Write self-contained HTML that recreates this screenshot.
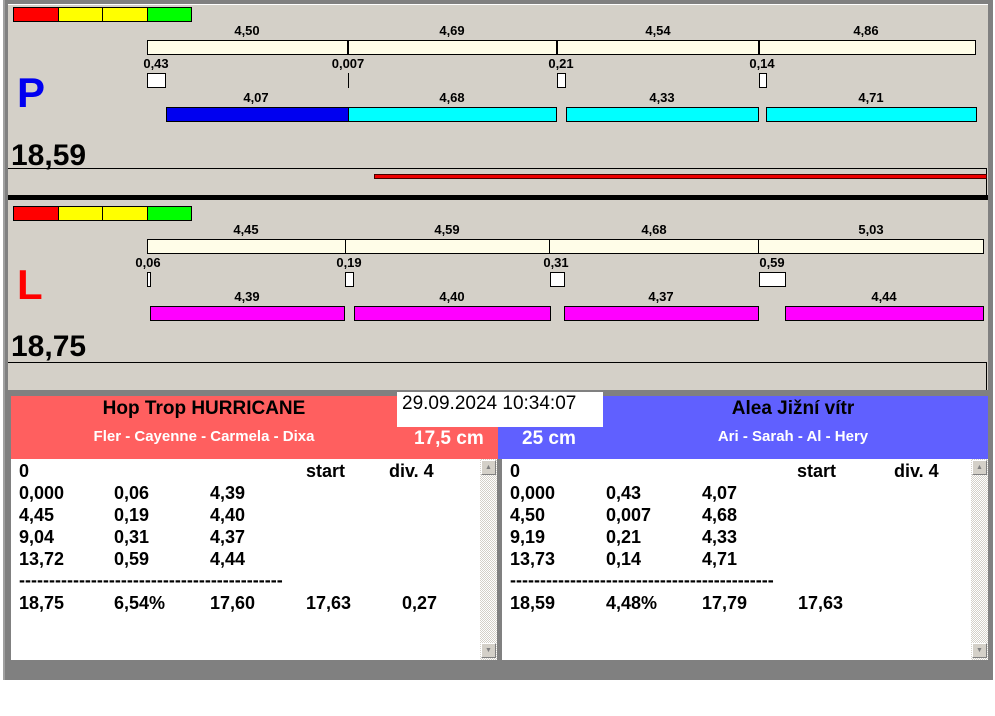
<!DOCTYPE html>
<html><head><meta charset="utf-8"><style>
*{margin:0;padding:0;box-sizing:border-box}
body{width:995px;height:716px;background:#fff;position:relative;overflow:hidden;font-family:"Liberation Sans",Arial,sans-serif;font-weight:bold}
div{position:absolute}
.b{border:1px solid #000}
.t{font-size:13px;color:#000;transform:translateX(-50%);white-space:nowrap;line-height:14px}
.row{font-size:18px;line-height:22px;color:#000;white-space:nowrap}
.sb{background:repeating-conic-gradient(#d4d0c8 0 25%,#fff 0 50%) 0 0/2px 2px;width:17px}
.arr{width:15px;height:15px;background:#d4d0c8;border:1px solid;border-color:#fff #808080 #808080 #fff;left:1px;font-size:7px;color:#808080;text-align:center;line-height:13px}
</style></head><body>
<div style="left:3px;top:0;width:990px;height:680px;background:#808080"></div>
<div style="left:8px;top:5px;width:980px;height:385px;background:#d4d0c8"></div>
<div style="left:3px;top:0;width:2px;height:680px;background:#a0a0a0"></div>
<div style="left:8px;top:4px;width:980px;height:1px;background:#fff"></div>

<!-- P section -->
<div class="b" style="left:13px;top:7px;width:46px;height:15px;background:#f00"></div>
<div class="b" style="left:58px;top:7px;width:45px;height:15px;background:#ff0"></div>
<div class="b" style="left:102px;top:7px;width:46px;height:15px;background:#ff0"></div>
<div class="b" style="left:147px;top:7px;width:45px;height:15px;background:#0f0"></div>
<div class="t" style="left:247px;top:24px">4,50</div>
<div class="t" style="left:452px;top:24px">4,69</div>
<div class="t" style="left:658px;top:24px">4,54</div>
<div class="t" style="left:866px;top:24px">4,86</div>
<div class="b" style="left:147px;top:40px;width:829px;height:15px;background:#fffde8"></div>
<div style="left:347px;top:40px;width:2px;height:15px;background:#000"></div>
<div style="left:556px;top:40px;width:2px;height:15px;background:#000"></div>
<div style="left:758px;top:40px;width:2px;height:15px;background:#000"></div>
<div class="t" style="left:156px;top:57px">0,43</div>
<div class="t" style="left:348px;top:57px">0,007</div>
<div class="t" style="left:561px;top:57px">0,21</div>
<div class="t" style="left:762px;top:57px">0,14</div>
<div class="b" style="left:147px;top:73px;width:19px;height:15px;background:#fff"></div>
<div style="left:348px;top:73px;width:1px;height:15px;background:#000"></div>
<div class="b" style="left:557px;top:73px;width:9px;height:15px;background:#fff"></div>
<div class="b" style="left:759px;top:73px;width:8px;height:15px;background:#fff"></div>
<div class="t" style="left:256px;top:91px">4,07</div>
<div class="t" style="left:452px;top:91px">4,68</div>
<div class="t" style="left:662px;top:91px">4,33</div>
<div class="t" style="left:871px;top:91px">4,71</div>
<div class="b" style="left:166px;top:107px;width:183px;height:15px;background:#0000f0"></div>
<div class="b" style="left:348px;top:107px;width:209px;height:15px;background:#0ff"></div>
<div class="b" style="left:566px;top:107px;width:193px;height:15px;background:#0ff"></div>
<div class="b" style="left:766px;top:107px;width:211px;height:15px;background:#0ff"></div>
<div style="left:17px;top:70px;font-size:42px;line-height:46px;color:#0000f0">P</div>
<div style="left:11px;top:139px;font-size:30px;line-height:34px;color:#000">18,59</div>
<div style="left:8px;top:168px;width:979px;height:1px;background:#000"></div>
<div style="left:986px;top:168px;width:1px;height:27px;background:#000"></div>
<div style="left:374px;top:174px;width:613px;height:5px;background:#e00;border:1px solid #400"></div>
<div style="left:8px;top:195px;width:980px;height:5px;background:#000"></div>

<!-- L section -->
<div class="b" style="left:13px;top:206px;width:46px;height:15px;background:#f00"></div>
<div class="b" style="left:58px;top:206px;width:45px;height:15px;background:#ff0"></div>
<div class="b" style="left:102px;top:206px;width:46px;height:15px;background:#ff0"></div>
<div class="b" style="left:147px;top:206px;width:45px;height:15px;background:#0f0"></div>
<div class="t" style="left:246px;top:223px">4,45</div>
<div class="t" style="left:447px;top:223px">4,59</div>
<div class="t" style="left:654px;top:223px">4,68</div>
<div class="t" style="left:871px;top:223px">5,03</div>
<div class="b" style="left:147px;top:239px;width:837px;height:15px;background:#fffde8"></div>
<div style="left:345px;top:239px;width:1px;height:15px;background:#000"></div>
<div style="left:549px;top:239px;width:1px;height:15px;background:#000"></div>
<div style="left:758px;top:239px;width:1px;height:15px;background:#000"></div>
<div class="t" style="left:148px;top:256px">0,06</div>
<div class="t" style="left:349px;top:256px">0,19</div>
<div class="t" style="left:556px;top:256px">0,31</div>
<div class="t" style="left:772px;top:256px">0,59</div>
<div class="b" style="left:147px;top:272px;width:4px;height:15px;background:#fff"></div>
<div class="b" style="left:345px;top:272px;width:9px;height:15px;background:#fff"></div>
<div class="b" style="left:550px;top:272px;width:15px;height:15px;background:#fff"></div>
<div class="b" style="left:759px;top:272px;width:27px;height:15px;background:#fff"></div>
<div class="t" style="left:247px;top:290px">4,39</div>
<div class="t" style="left:452px;top:290px">4,40</div>
<div class="t" style="left:661px;top:290px">4,37</div>
<div class="t" style="left:884px;top:290px">4,44</div>
<div class="b" style="left:150px;top:306px;width:195px;height:15px;background:#f0f"></div>
<div class="b" style="left:354px;top:306px;width:197px;height:15px;background:#f0f"></div>
<div class="b" style="left:564px;top:306px;width:195px;height:15px;background:#f0f"></div>
<div class="b" style="left:785px;top:306px;width:199px;height:15px;background:#f0f"></div>
<div style="left:17px;top:262px;font-size:42px;line-height:46px;color:#f00">L</div>
<div style="left:11px;top:330px;font-size:30px;line-height:34px;color:#000">18,75</div>
<div style="left:8px;top:362px;width:979px;height:1px;background:#000"></div>
<div style="left:986px;top:362px;width:1px;height:28px;background:#000"></div>

<!-- bottom headers -->
<div style="left:11px;top:396px;width:487px;height:63px;background:#ff5f5f"></div>
<div style="left:498px;top:396px;width:490px;height:63px;background:#6060ff"></div>
<div style="left:204px;top:398px;font-size:19px;transform:translateX(-50%);white-space:nowrap">Hop Trop HURRICANE</div>
<div style="left:204px;top:428px;font-size:15px;color:#fff;transform:translateX(-50%);white-space:nowrap">Fler - Cayenne - Carmela - Dixa</div>
<div style="left:793px;top:398px;font-size:19px;transform:translateX(-50%);white-space:nowrap">Alea Jižní vítr</div>
<div style="left:793px;top:428px;font-size:15px;color:#fff;transform:translateX(-50%);white-space:nowrap">Ari - Sarah - Al - Hery</div>
<div style="left:397px;top:392px;width:206px;height:35px;background:#fff;font-weight:normal;font-size:19px;padding:1px 0 0 5px">29.09.2024 10:34:07</div>
<div style="left:414px;top:428px;font-size:19px;color:#fff">17,5 cm</div>
<div style="left:522px;top:428px;font-size:19px;color:#fff">25 cm</div>

<!-- lists -->
<div style="left:11px;top:459px;width:469px;height:201px;background:#fff"></div>
<div class="sb" style="left:480px;top:459px;height:201px"><div class="arr" style="top:1px">▲</div><div class="arr" style="top:184px">▼</div></div>
<div style="left:502px;top:459px;width:469px;height:201px;background:#fff"></div>
<div class="sb" style="left:971px;top:459px;height:201px"><div class="arr" style="top:1px">▲</div><div class="arr" style="top:184px">▼</div></div>

<div class="row" style="left:19px;top:460px">0</div>
<div class="row" style="left:306px;top:460px">start</div>
<div class="row" style="left:389px;top:460px">div. 4</div>
<div class="row" style="left:19px;top:482px">0,000<br>4,45<br>9,04<br>13,72</div>
<div class="row" style="left:114px;top:482px">0,06<br>0,19<br>0,31<br>0,59</div>
<div class="row" style="left:210px;top:482px">4,39<br>4,40<br>4,37<br>4,44</div>
<div class="row" style="left:19px;top:569px">--------------------------------------------</div>
<div class="row" style="left:19px;top:592px">18,75</div>
<div class="row" style="left:114px;top:592px">6,54%</div>
<div class="row" style="left:210px;top:592px">17,60</div>
<div class="row" style="left:306px;top:592px">17,63</div>
<div class="row" style="left:402px;top:592px">0,27</div>

<div class="row" style="left:510px;top:460px">0</div>
<div class="row" style="left:797px;top:460px">start</div>
<div class="row" style="left:894px;top:460px">div. 4</div>
<div class="row" style="left:510px;top:482px">0,000<br>4,50<br>9,19<br>13,73</div>
<div class="row" style="left:606px;top:482px">0,43<br>0,007<br>0,21<br>0,14</div>
<div class="row" style="left:702px;top:482px">4,07<br>4,68<br>4,33<br>4,71</div>
<div class="row" style="left:510px;top:569px">--------------------------------------------</div>
<div class="row" style="left:510px;top:592px">18,59</div>
<div class="row" style="left:606px;top:592px">4,48%</div>
<div class="row" style="left:702px;top:592px">17,79</div>
<div class="row" style="left:798px;top:592px">17,63</div>
</body></html>
